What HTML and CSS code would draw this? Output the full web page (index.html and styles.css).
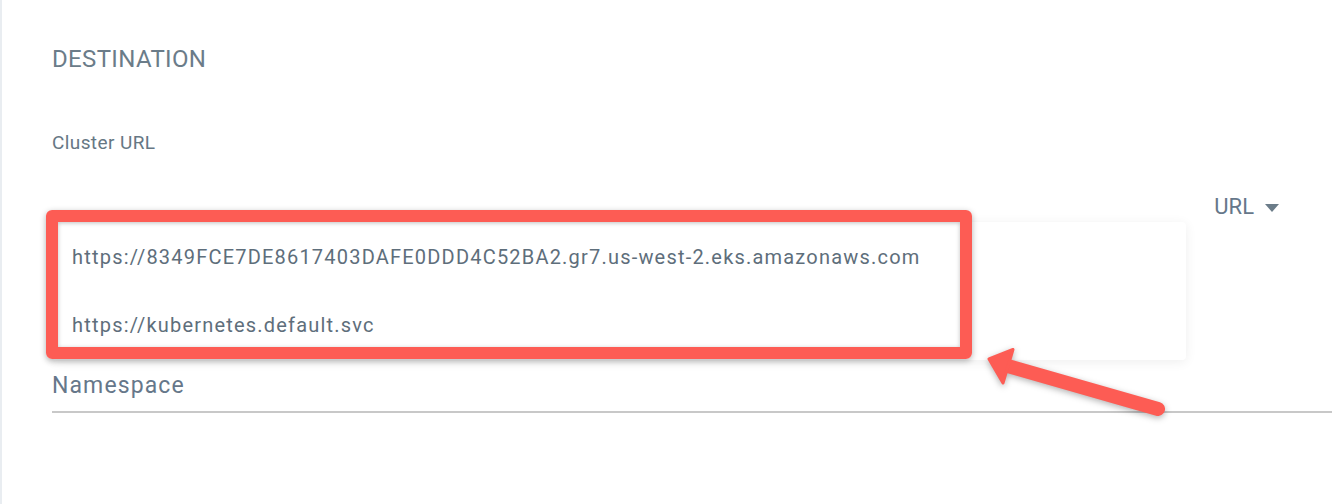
FILE: index.html
```html
<!DOCTYPE html>
<html>
<head>
<meta charset="utf-8">
<link rel="stylesheet" href="styles.css">
</head>
<body>
<div class="panel">
  <h2 class="title">DESTINATION</h2>
  <div class="label">Cluster URL</div>
  <div class="row">
    <div class="input">
      <div class="menu">
        <div class="item">https://8349FCE7DE8617403DAFE0DDD4C52BA2.gr7.us-west-2.eks.amazonaws.com</div>
        <div class="item">https://kubernetes.default.svc</div>
      </div>
    </div>
    <div class="selector">URL<span class="caret"></span></div>
  </div>
  <div class="field">Namespace</div>

  <div class="highlight"></div>
  <svg class="arrow" width="220" height="100" viewBox="0 0 220 100">
    <line x1="36" y1="35.5" x2="188" y2="79" stroke="#fd5c54" stroke-width="14" stroke-linecap="round"/>
    <polygon points="19,29 43,19.5 33,53" fill="#fd5c54" stroke="#fd5c54" stroke-width="3" stroke-linejoin="round"/>
  </svg>
</div>
</body>
</html>
```
FILE: styles.css
```css
html, body {
  margin: 0;
  padding: 0;
  background: #ffffff;
}
body {
  font-family: Roboto, "Liberation Sans", sans-serif;
  color: #5e6e7b;
}
.panel {
  position: relative;
  height: 504px;
  box-sizing: border-box;
  border-left: 2px solid #e9edf1;
  padding: 45px 0 0 50px;
  overflow: hidden;
}
.title {
  margin: 0;
  font-size: 24px;
  line-height: 28px;
  font-weight: 400;
  letter-spacing: 0.35px;
  color: #6b7c89;
}
.label {
  margin-top: 59px;
  font-size: 19px;
  line-height: 22px;
  letter-spacing: 0.4px;
  color: #667784;
}
.row {
  margin-top: 38px;
  display: flex;
  height: 30px;
}
.input {
  position: relative;
  flex: 1;
}
.menu {
  position: absolute;
  left: 0;
  top: 30px;
  width: 1134px;
  padding: 1px 0;
  background: #ffffff;
  border-radius: 4px;
  box-shadow: 0 2px 12px rgba(0, 0, 0, 0.07);
  z-index: 2;
}
.item {
  height: 68px;
  line-height: 68px;
  padding-left: 20px;
  font-size: 20px;
  letter-spacing: 1.2px;
  color: #5e6e7b;
  white-space: nowrap;
}
.selector {
  margin-right: 53px;
  font-size: 22px;
  line-height: 26px;
  color: #66778a;
  display: flex;
  align-items: center;
}
.caret {
  display: inline-block;
  margin-left: 11px;
  margin-top: 2px;
  width: 0;
  height: 0;
  border-left: 7px solid transparent;
  border-right: 7px solid transparent;
  border-top: 8px solid #6b7c89;
}
.field {
  margin-top: 151px;
  font-size: 23px;
  line-height: 26px;
  letter-spacing: 1.1px;
  color: #66778a;
  padding-bottom: 12px;
  border-bottom: 2px solid #c8c8c8;
}
.highlight {
  position: absolute;
  left: 44px;
  top: 210px;
  width: 926px;
  height: 149px;
  box-sizing: border-box;
  border: 12px solid #fd5c54;
  border-radius: 6px;
  box-shadow: 0 2px 6px rgba(0, 0, 0, 0.3), inset 0 1px 4px rgba(0, 0, 0, 0.25);
  z-index: 3;
}
.arrow {
  position: absolute;
  left: 968px;
  top: 330px;
  z-index: 3;
  filter: drop-shadow(0 2px 3px rgba(0, 0, 0, 0.3));
}
```
